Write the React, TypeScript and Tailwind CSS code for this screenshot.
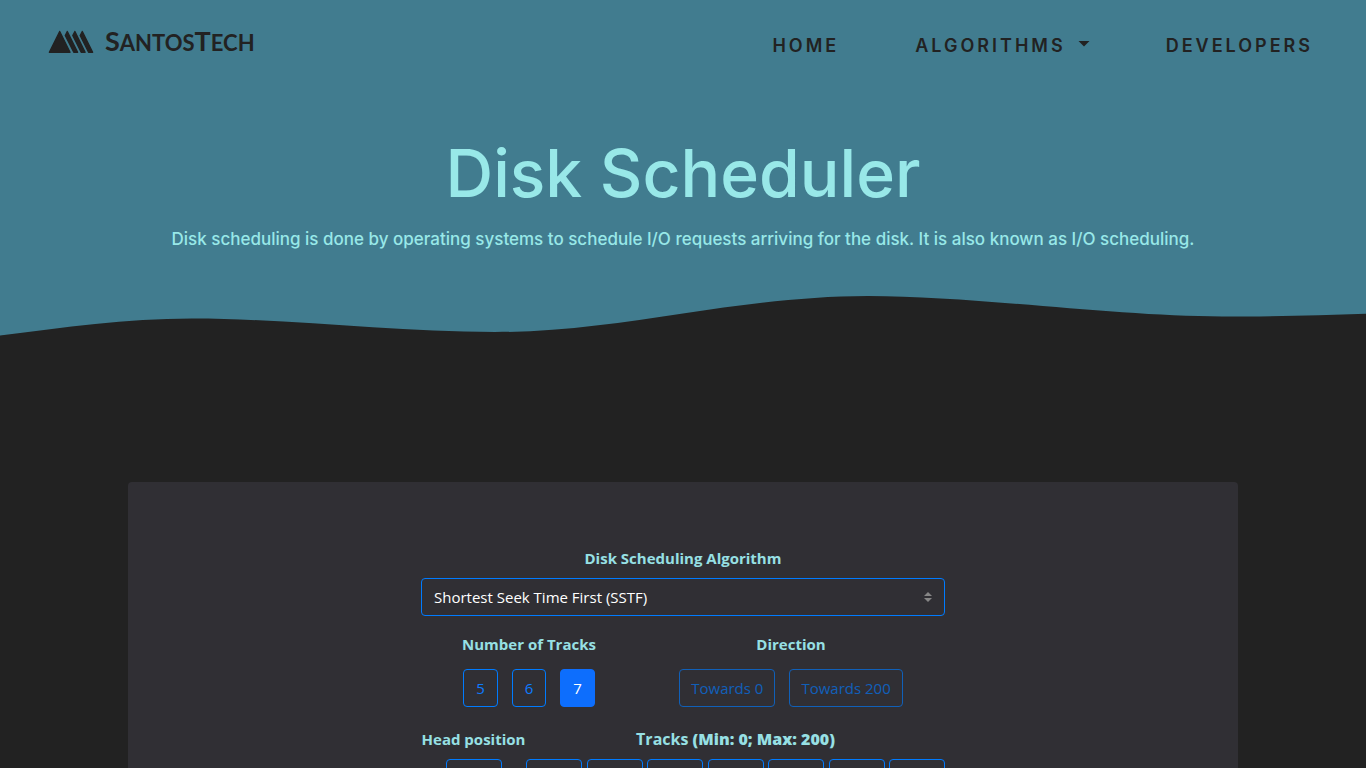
import { useState } from "react";

const algorithms = [
  "Shortest Seek Time First (SSTF)",
  "First Come First Serve (FCFS)",
  "SCAN",
  "C-SCAN",
  "LOOK",
  "C-LOOK",
];

const labelClass = "text-[15px] leading-6 font-bold text-[#97e0e4]";
const fieldClass =
  "h-[38px] w-14 rounded border border-[#007bff] bg-transparent text-center text-white";

function Logo() {
  return (
    <svg className="mb-px" width="46" height="24" viewBox="0 0 46 24" aria-hidden="true">
      <g fill="#222222" stroke="#222222" strokeWidth="1.4" strokeLinejoin="round">
        <path d="M11.7 1.5 1.4 22.3H22Z" />
        <path d="M19.3 1.5 17.3 5.5 25.8 22.3H29.6Z" />
        <path d="M26.9 1.5 24.8 5.5 33.2 22.3H37.1Z" />
        <path d="M34.3 1.5 32.2 5.5 40.6 22.3H44.6Z" />
      </g>
    </svg>
  );
}

function Header() {
  return (
    <header className="bg-[#417c8f] font-['Inter','Liberation_Sans',sans-serif]">
      <nav className="flex items-start justify-between pt-[23px] pr-[53px] pl-12">
        <a href="#" className="flex items-center gap-[11px] text-[#222222]">
          <Logo />
          <span className="font-['Lato',sans-serif] text-[27px] leading-9 font-bold uppercase">
            S<span className="text-[22px]">antos</span>T<span className="text-[22px]">ech</span>
          </span>
        </a>
        <ul className="flex gap-[76px] pt-2 text-lg leading-[30px] font-semibold tracking-[3px] text-[#222222]">
          <li>
            <a href="#">HOME</a>
          </li>
          <li>
            <a href="#" className="flex gap-3">
              ALGORITHMS
              <svg className="mt-[10px]" width="12" height="6" viewBox="0 0 12 6" aria-hidden="true">
                <path d="M0.5 0H11.5L6 5.5Z" fill="#222222" />
              </svg>
            </a>
          </li>
          <li>
            <a href="#">DEVELOPERS</a>
          </li>
        </ul>
      </nav>
      <div className="pt-[72px] text-center text-[#98e8e8]">
        <h1 className="text-[66px] leading-20 font-medium">Disk Scheduler</h1>
        <p className="mt-[14px] text-[17px] leading-6 font-medium">
          Disk scheduling is done by operating systems to schedule I/O requests arriving for the
          disk. It is also known as I/O scheduling.
        </p>
      </div>
      <svg
        className="mt-10 block h-[50px] w-full"
        viewBox="0 0 1366 50"
        preserveAspectRatio="none"
        aria-hidden="true"
      >
        <path
          fill="#222222"
          d="M0 44.5C65 36.5 125 27.5 192 27.5C290 27.5 390 41 495 41C560 41 620 32 683 22.5C745 13.5 805 5 868 5C975 5 1115 25.5 1222 25.5C1275 25.5 1320 24.5 1366 22.8V50H0Z"
        />
      </svg>
    </header>
  );
}

function SchedulerForm() {
  const [tracks, setTracks] = useState(7);
  return (
    <form className="mx-auto grid w-full max-w-[524px] font-['Open_Sans','Noto_Sans',sans-serif] text-[15px] leading-6">
      <label htmlFor="algorithm" className={`${labelClass} text-center`}>
        Disk Scheduling Algorithm
      </label>
      <div className="mt-2 grid items-center">
        <select
          id="algorithm"
          className="col-start-1 row-start-1 h-[38px] w-full appearance-none rounded border border-[#007bff] bg-transparent px-3 text-white"
        >
          {algorithms.map((name) => (
            <option key={name} className="bg-[#302f34]">
              {name}
            </option>
          ))}
        </select>
        <svg
          className="pointer-events-none col-start-1 row-start-1 mr-[13px] justify-self-end"
          width="8"
          height="10"
          viewBox="0 0 4 5"
          aria-hidden="true"
        >
          <path fill="#868686" d="M2 0 0 2h4zm0 5L0 3h4z" />
        </svg>
      </div>

      <div className="mt-4 grid grid-cols-[216fr_308fr] text-center">
        <fieldset>
          <legend className={`${labelClass} w-full`}>Number of Tracks</legend>
          <div className="mt-[13px] flex justify-center gap-[14px]">
            {[5, 6, 7].map((n) => (
              <button
                key={n}
                type="button"
                onClick={() => setTracks(n)}
                className={
                  n === tracks
                    ? "h-[38px] rounded border border-[#0d6efd] bg-[#0d6efd] px-3 text-white"
                    : "h-[38px] rounded border border-[#007bff] px-3 text-[#0d7bff]"
                }
              >
                {n}
              </button>
            ))}
          </div>
        </fieldset>
        <fieldset disabled>
          <legend className={`${labelClass} w-full`}>Direction</legend>
          <div className="mt-[13px] flex justify-center gap-[14px]">
            <button type="button" className="h-[38px] rounded border border-[#007bff] px-[11px] text-[#007bff] opacity-65">
              Towards 0
            </button>
            <button type="button" className="h-[38px] rounded border border-[#007bff] px-[11px] text-[#007bff] opacity-65">
              Towards 200
            </button>
          </div>
        </fieldset>
      </div>

      <div className="mt-5 grid grid-cols-[105fr_419fr] text-center">
        <div>
          <label htmlFor="head" className={`${labelClass} block whitespace-nowrap`}>
            Head position
          </label>
          <input id="head" type="text" inputMode="numeric" className={`${fieldClass} mt-2`} />
        </div>
        <fieldset>
          <legend className="w-full text-base leading-6 font-bold text-[#97e0e4]">
            Tracks <b className="font-extrabold">(Min: 0; Max: 200)</b>
          </legend>
          <div className="mt-2 flex justify-between">
            {Array.from({ length: tracks }, (_, i) => (
              <input
                key={i}
                type="text"
                inputMode="numeric"
                aria-label={`Track ${i + 1}`}
                className={fieldClass}
              />
            ))}
          </div>
        </fieldset>
      </div>
    </form>
  );
}

export default function App() {
  return (
    <div className="min-h-screen bg-[#222222]">
      <Header />
      <main className="px-8 pt-[141px] pb-16">
        <section className="mx-auto max-w-[1110px] rounded bg-[#302f34] px-6 pt-16 pb-16">
          <SchedulerForm />
        </section>
      </main>
    </div>
  );
}
